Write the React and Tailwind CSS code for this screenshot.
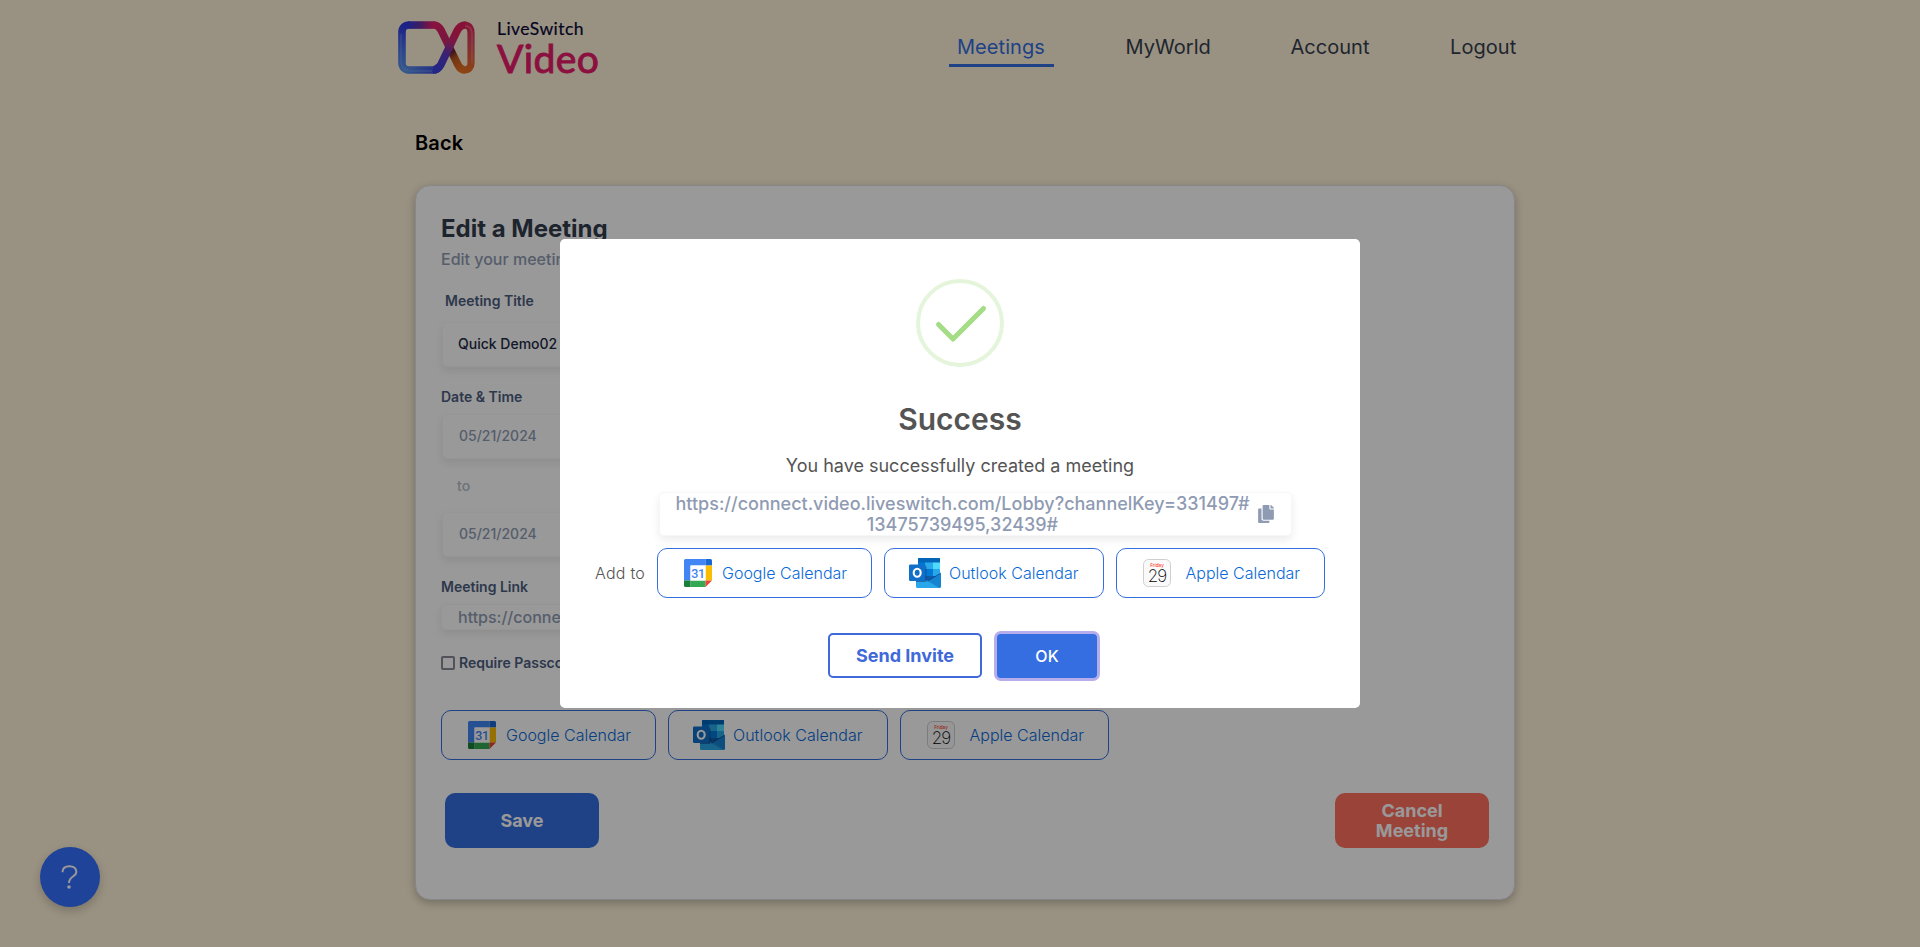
import React from "react";
import { FaCopy } from "react-icons/fa";

function LogoMark() {
  return (
    <svg width="78" height="54" viewBox="0 0 78 54" fill="none" strokeLinecap="butt">
      <defs>
        <linearGradient id="left" gradientUnits="userSpaceOnUse" x1="0" y1="4" x2="0" y2="50">
          <stop offset="0" stopColor="#3038e0" />
          <stop offset="0.5" stopColor="#4a6ee8" />
          <stop offset="1" stopColor="#5a94e8" />
        </linearGradient>
        <linearGradient id="top" gradientUnits="userSpaceOnUse" x1="10" y1="0" x2="40" y2="0">
          <stop offset="0" stopColor="#3038e0" />
          <stop offset="0.4" stopColor="#6a2fa4" />
          <stop offset="0.8" stopColor="#e01f6a" />
          <stop offset="1" stopColor="#e02468" />
        </linearGradient>
        <linearGradient id="bottom" gradientUnits="userSpaceOnUse" x1="6" y1="0" x2="42" y2="0">
          <stop offset="0" stopColor="#5a94e8" />
          <stop offset="1" stopColor="#3c46da" />
        </linearGradient>
        <linearGradient id="down" gradientUnits="userSpaceOnUse" x1="38" y1="6" x2="64" y2="50">
          <stop offset="0" stopColor="#e02068" />
          <stop offset="0.45" stopColor="#c02a6a" />
          <stop offset="0.58" stopColor="#6a2430" />
          <stop offset="0.72" stopColor="#c05a20" />
          <stop offset="1" stopColor="#ee7420" />
        </linearGradient>
        <linearGradient id="right" gradientUnits="userSpaceOnUse" x1="0" y1="4" x2="0" y2="50">
          <stop offset="0" stopColor="#e0285c" />
          <stop offset="0.4" stopColor="#d8485c" />
          <stop offset="1" stopColor="#e97022" />
        </linearGradient>
        <linearGradient id="up" gradientUnits="userSpaceOnUse" x1="40" y1="48" x2="66" y2="6">
          <stop offset="0" stopColor="#3c42de" />
          <stop offset="0.35" stopColor="#6238c0" />
          <stop offset="0.6" stopColor="#c22a78" />
          <stop offset="0.8" stopColor="#e0205c" />
        </linearGradient>
      </defs>
      <path d="M36 4C40 4 41.500 6.500 43 9L60 44C62 48 64 49 67 49" stroke="url(#down)" strokeWidth="7.600" />
      <path d="M66.500 49C71 49 73 46 73 42V12C73 7 71 4 66.500 4" stroke="url(#right)" strokeWidth="7.200" />
      <path d="M10 4.050H37" stroke="url(#top)" strokeWidth="7.600" />
      <path d="M11 4C7 4 4 7 4 11V42C4 46 7 49 11 49" stroke="url(#left)" strokeWidth="7.600" />
      <path d="M10.500 49H35C38 49 40 47.500 41.500 45" stroke="url(#bottom)" strokeWidth="7.600" />
      <path d="M35 49C39 49 41 47 43 43.500L59 10C61 6 63 4 67.500 4" stroke="url(#up)" strokeWidth="7.600" />
      <path d="M3 13V41C3 46 7 50 12 50H34" stroke="#8ab8ff" strokeOpacity="0.35" strokeWidth="1.500" />
      <path d="M74 42V13C74 8 72 5 67 5" stroke="#ffb0a8" strokeOpacity="0.4" strokeWidth="1.500" />
    </svg>
  );
}

function GoogleIcon() {
  return (
    <svg width="28" height="28" viewBox="0 0 28 28">
      <path d="M1.500 0H21.500V6.500H6.500V21.500H0V1.500Q0 0 1.500 0Z" fill="#4285f4" />
      <path d="M21.500 0H26.500Q28 0 28 1.500V6.500H21.500Z" fill="#1967d2" />
      <path d="M21.500 6.500H28V21.500H21.500Z" fill="#fbbc04" />
      <path d="M6.500 21.500H21.500V28H6.500Z" fill="#34a853" />
      <path d="M0 21.500H6.500V28H1.500Q0 28 0 26.500Z" fill="#188038" />
      <path d="M21.500 21.500H28L21.500 28Z" fill="#ea4335" />
      <path d="M6.500 6.500H21.500V21.500H6.500Z" fill="#fff" />
      <text x="14" y="18.500" textAnchor="middle" fontFamily="Roboto, sans-serif" fontSize="12.500" fontWeight="500" letterSpacing="-0.300" fill="#4285f4">31</text>
    </svg>
  );
}

function OutlookIcon() {
  return (
    <svg width="32" height="30" viewBox="0 0 32 30">
      <path d="M10 0H30Q31 0 31 1V18H9V1Q9 0 10 0Z" fill="#0078d4" />
      <path d="M10 0H30Q31 0 31 1V4.500H9V1Q9 0 10 0Z" fill="#0364b8" />
      <path d="M16 4.500H24V11H16Z" fill="#28a8ea" />
      <path d="M24 4.500H31V11H24Z" fill="#50d9ff" />
      <path d="M24 11H31V18H24Z" fill="#28a8ea" />
      <path d="M16 11H24V18H16Z" fill="#0078d4" />
      <path d="M9 11H16V18H9Z" fill="#0364b8" />
      <path d="M16 18H30L19 24H16Z" fill="#0f5aa8" />
      <path d="M32 15.500L19 23L31 30Q32 29.500 32 28.500Z" fill="#1583d0" />
      <path d="M7 22L19 22.500L31 30H8.500Q7 30 7 28.500Z" fill="#28a8ea" />
      <path d="M18 22.500L31 30" stroke="#1478c4" strokeWidth="0.700" />
      <path d="M18.500 23L32 15" stroke="#0a4f94" strokeWidth="0.900" />
      <path d="M7 8H16Q17.500 8 17.500 9.500V22.500Q17.500 24 16 24H7Z" fill="#0a2767" fillOpacity="0.450" />
      <rect y="6.500" width="16.500" height="16.500" rx="1.300" fill="#0f6fc9" />
      <ellipse cx="8.200" cy="14.700" rx="3.500" ry="4" fill="none" stroke="#fff" strokeWidth="2.100" />
    </svg>
  );
}

function AppleIcon() {
  return (
    <svg width="28" height="28" viewBox="0 0 28 28">
      <rect x="0.500" y="0.500" width="27" height="27" rx="5" fill="#fafafa" stroke="#cfcfcf" />
      <text x="14" y="8.300" textAnchor="middle" fontFamily="Inter, sans-serif" fontSize="4.600" fontWeight="500" fill="#ff3b30">Friday</text>
      <text x="14" y="22.700" textAnchor="middle" fontFamily="Inter, sans-serif" fontSize="17" fontWeight="200" letterSpacing="-0.900" fill="#000">29</text>
    </svg>
  );
}

const calendarButton =
  "flex h-[50px] shrink-0 items-center rounded-[10px] border border-[#346ee0] text-base font-light text-[#0a6ad8]";

function CalendarButtons() {
  return (
    <div className="flex gap-3">
      <button className={`${calendarButton} w-[215px] pl-[26px]`}>
        <GoogleIcon />
        <span className="ml-[10px] whitespace-nowrap">Google Calendar</span>
      </button>
      <button className={`${calendarButton} w-[220px] pl-6`}>
        <OutlookIcon />
        <span className="ml-2 tracking-[0.03px] whitespace-nowrap">Outlook Calendar</span>
      </button>
      <button className={`${calendarButton} w-[209px] pl-[26px]`}>
        <AppleIcon />
        <span className="ml-[14.500px] whitespace-nowrap">Apple Calendar</span>
      </button>
    </div>
  );
}

function Header() {
  const link = "flex h-[42px] items-center px-2 pt-[2px] text-xl tracking-[0.05px] text-[#36404f]";
  return (
    <header className="flex h-[90px] pl-[398px]">
      <div className="mt-[21px]">
        <LogoMark />
      </div>
      <div className="mt-[20px] ml-[21px] w-[119px] font-[Lato,sans-serif] whitespace-nowrap">
        <div className="text-[17.500px] leading-[18px] tracking-[0.45px] text-[#0a0838] [-webkit-text-stroke:0.2px_#0a0838]">LiveSwitch</div>
        <div className="pt-px text-[39px] leading-[38px] tracking-[0.4px] text-[#e81c6c] [-webkit-text-stroke:1px_#e81c6c]">Video</div>
      </div>
      <nav className="mt-[25px] ml-[333px] flex gap-[63.500px]">
        <a className="flex h-[42px] w-[105px] items-center border-b-[3px] border-[#346ee0] pt-[5px] pl-2 text-xl tracking-[0.05px] text-[#346ee0]">Meetings</a>
        <a className={link}>MyWorld</a>
        <a className={link}>Account</a>
        <a className={`${link} ml-px`}>Logout</a>
      </nav>
    </header>
  );
}

const field =
  "flex w-[520px] items-center rounded-[5px] border border-[#f9f9f9] bg-white px-[15px] shadow-[0_4px_8px_rgba(0,0,0,0.08)]";
const label = "text-sm leading-[20px] font-semibold text-[#4d5e80]";

function MeetingCard() {
  return (
    <section className="ml-[415px] flex h-[715px] w-[1100px] flex-col rounded-[15px] border border-[#e2e2e6] bg-white px-[25px] pt-[28px] shadow-[0_3px_8px_rgba(0,0,0,0.25)]">
      <h1 className="text-2xl leading-[30px] font-bold text-[#333c4d]">Edit a Meeting</h1>
      <p className="mt-[4px] text-base leading-[22px] font-medium text-[#8f9bb3]">Edit your meeting</p>
      <div className={`${label} mt-[21px] ml-1`}>Meeting Title</div>
      <div className={`${field} mt-[11px] ml-px h-[45px] pb-px text-sm font-medium text-[#222b45]`}>Quick Demo02</div>
      <div className={`${label} mt-[20px]`}>Date &amp; Time</div>
      <div className={`${field} mt-[7px] ml-px h-[45px] pb-px pl-4 text-sm font-medium text-[#8f9bb3]`}>05/21/2024</div>
      <div className="mt-[17px] ml-4 text-sm leading-[20px] font-medium text-[#b5bccb]">to</div>
      <div className={`${field} mt-[16px] ml-px h-[45px] pb-px pl-4 text-sm font-medium text-[#8f9bb3]`}>05/21/2024</div>
      <div className={`${label} mt-[20px]`}>Meeting Link</div>
      <div className={`${field} mt-[7px] h-[26px] pl-4 text-base font-medium text-[#8f9bb3]`}>https://connect.video.liveswitch.com</div>
      <div className="mt-[23px] flex items-center gap-1">
        <span className="size-[14px] rounded-[2px] border-2 border-[#8a8797]" />
        <span className={label}>Require Passcode</span>
      </div>
      <div className="mt-[37px]">
        <CalendarButtons />
      </div>
      <div className="mt-[33px] flex justify-between pl-1">
        <button className="h-[55px] w-[154px] rounded-[10px] bg-[#346ee0] text-lg font-bold text-white">Save</button>
        <button className="h-[55px] w-[154px] rounded-[10px] bg-[#ff705f] px-6 text-lg leading-[20px] font-bold text-white">Cancel Meeting</button>
      </div>
    </section>
  );
}

function SuccessDialog() {
  return (
    <div className="flex h-[469px] w-[800px] flex-col items-center rounded-[5px] bg-white text-[#545454]">
      <svg className="mt-[40px] shrink-0" width="88" height="88" viewBox="0 0 88 88" fill="none">
        <circle cx="44" cy="44" r="42" stroke="#e4f5db" strokeWidth="4" />
        <path d="M22.500 45.500L37 60L67.500 29.500" stroke="#a5dc86" strokeWidth="5" strokeLinecap="round" strokeLinejoin="round" />
      </svg>
      <h2 className="mt-[34px] text-[30px] leading-[36px] font-semibold">Success</h2>
      <p className="mt-[17px] text-lg leading-[24px]">You have successfully created a meeting</p>
      <div className="mt-[14px] ml-[31px] flex h-[44px] w-[633px] items-center rounded-[5px] border border-[#f7f7f7] pt-px pl-[15px] shadow-[0_4px_8px_rgba(0,0,0,0.08)]">
        <div className="w-[575px] text-center text-lg leading-[20.500px] font-medium whitespace-nowrap text-[#8f9bb3]">
          <div>https://connect.video.liveswitch.com/Lobby?channelKey=331497#</div>
          <div>13475739495,32439#</div>
        </div>
        <FaCopy className="mb-px ml-[7px] text-[18px] text-[#8f9bb3]" />
      </div>
      <div className="mt-[12px] flex w-full items-center pl-[35px]">
        <span className="w-[62px] text-base font-light tracking-[0.25px]">Add to</span>
        <CalendarButtons />
      </div>
      <div className="mt-[35px] ml-[5px] flex items-center gap-[15px]">
        <button className="h-[45px] w-[154px] rounded-[5px] border-2 border-[#4069d9] text-lg font-bold text-[#4069d9]">Send Invite</button>
        <button className="h-[44px] w-[100px] rounded-[4px] bg-[#346ee0] text-base font-medium text-white shadow-[0_0_0_3px_#b5adec]">OK</button>
      </div>
    </div>
  );
}

export default function App() {
  return (
    <div className="relative h-[947px] w-[1920px] overflow-hidden bg-[#fff3d9] font-[Inter,sans-serif]">
      <Header />
      <div className="mt-[40px] mb-[30px] ml-[415px] h-[25px] text-xl leading-[26px] font-semibold tracking-[0.15px] text-black">Back</div>
      <MeetingCard />
      <button className="absolute top-[847px] left-[40px] flex size-[60px] items-center justify-center rounded-full bg-[#3470ff] shadow-[0_4px_10px_rgba(0,0,0,0.2)]">
        <svg width="18" height="26" viewBox="0 0 18 26" fill="none" stroke="#fff" strokeWidth="2" strokeLinecap="butt">
          <path d="M1.500 8.200C1.500 4 4.300 2.200 8.500 2.200C12.800 2.200 15.400 4.600 15.400 8C15.400 12.600 8 12 8 19" />
          <circle cx="8" cy="23" r="1.800" fill="#fff" stroke="none" />
        </svg>
      </button>
      <div className="absolute inset-0 flex justify-center bg-black/40 pt-[239px]">
        <SuccessDialog />
      </div>
    </div>
  );
}
